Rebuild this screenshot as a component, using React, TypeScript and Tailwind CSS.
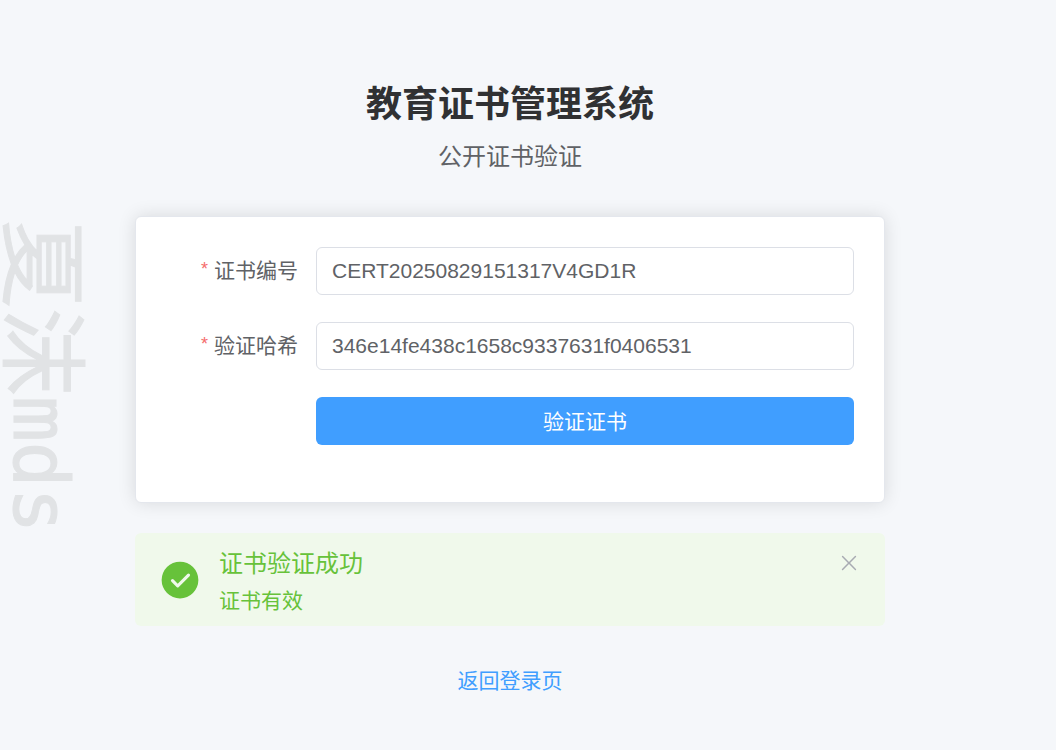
import { useState } from "react";

function SuccessIcon() {
  return (
    <svg viewBox="0 0 1024 1024" className="size-[42px] shrink-0" fill="currentColor" aria-hidden="true">
      <path d="M512 64a448 448 0 1 1 0 896 448 448 0 0 1 0-896m-55.808 536.384-99.52-99.584a38.4 38.4 0 1 0-54.336 54.336l126.72 126.72a38.272 38.272 0 0 0 54.336 0l262.4-262.464a38.4 38.4 0 1 0-54.272-54.336z" />
    </svg>
  );
}

function CloseIcon() {
  return (
    <svg viewBox="0 0 1024 1024" className="size-6" fill="currentColor" aria-hidden="true">
      <path d="M764.288 214.592 512 466.88 259.712 214.592a31.936 31.936 0 0 0-45.12 45.12L466.752 512 214.528 764.224a31.936 31.936 0 1 0 45.12 45.184L512 557.184l252.288 252.288a31.936 31.936 0 0 0 45.12-45.12L557.12 512.064l252.288-252.352a31.936 31.936 0 1 0-45.12-45.184z" />
    </svg>
  );
}

type FieldProps = {
  id: string;
  label: string;
  value: string;
  onChange: (value: string) => void;
};

function Field({ id, label, value, onChange }: FieldProps) {
  return (
    <div className="flex items-center">
      <label htmlFor={id} className="flex w-[150px] shrink-0 justify-end gap-1.5 pr-[18px]">
        <span className="text-lg leading-7 text-[#f56c6c]">*</span>
        {label}
      </label>
      <input
        id={id}
        type="text"
        required
        value={value}
        onChange={(e) => onChange(e.target.value)}
        className="h-12 min-w-0 flex-1 rounded-md border border-[#dcdfe6] bg-white px-[15px] outline-none focus:border-[#409eff]"
      />
    </div>
  );
}

export default function App() {
  const [number, setNumber] = useState("CERT20250829151317V4GD1R");
  const [hash, setHash] = useState("346e14fe438c1658c9337631f0406531");
  const [open, setOpen] = useState(true);

  return (
    <div className="relative min-h-screen bg-[#f5f7fa] pt-20 pr-9 pb-12 font-['Liberation_Sans','Noto_Sans_CJK_SC',sans-serif] text-[21px] text-[#606266]">
      <div
        aria-hidden="true"
        className="pointer-events-none absolute top-[220px] left-0.5 font-['Noto_Sans_CJK_SC',sans-serif] text-[88px] leading-[80px] whitespace-nowrap text-[#e1e3e5] [-webkit-text-stroke:1px_#e1e3e5] [text-orientation:sideways] [writing-mode:vertical-rl]"
      >
        夏沫<span className="align-[3px] font-['DejaVu_Sans_Mono',monospace] text-[76px] leading-none">mds</span>
      </div>

      <main className="mx-auto w-full max-w-[750px]">
        <header className="mb-[42px] text-center">
          <h1 className="text-4xl leading-[50px] font-bold text-[#303133]">教育证书管理系统</h1>
          <p className="mt-2.5 text-2xl leading-[34px]">公开证书验证</p>
        </header>

        <form
          onSubmit={(e) => {
            e.preventDefault();
            setOpen(true);
          }}
          className="flex flex-col gap-[27px] rounded-md border border-[#e4e7ed] bg-white px-[30px] pt-[30px] pb-[57px] shadow-[0_0_18px_rgba(0,0,0,0.12)]"
        >
          <Field id="number" label="证书编号" value={number} onChange={setNumber} />
          <Field id="hash" label="验证哈希" value={hash} onChange={setHash} />
          <button type="submit" className="ml-[150px] h-12 rounded-md bg-[#409eff] pt-0.5 text-white">
            验证证书
          </button>
        </form>

        {open && (
          <div role="alert" className="mt-[30px] flex items-center rounded-md bg-[#f0f9eb] px-6 py-3 text-[#67c23a]">
            <SuccessIcon />
            <div className="ml-[18px] flex-1">
              <h2 className="text-2xl leading-[38px]">证书验证成功</h2>
              <p className="mt-1 leading-[27px]">证书有效</p>
            </div>
            <button
              type="button"
              aria-label="关闭"
              onClick={() => setOpen(false)}
              className="mt-1.5 self-start text-[#a8abb2]"
            >
              <CloseIcon />
            </button>
          </div>
        )}

        <div className="mt-10 text-center leading-[30px]">
          <a href="#login" className="text-[#409eff]">
            返回登录页
          </a>
        </div>
      </main>
    </div>
  );
}
